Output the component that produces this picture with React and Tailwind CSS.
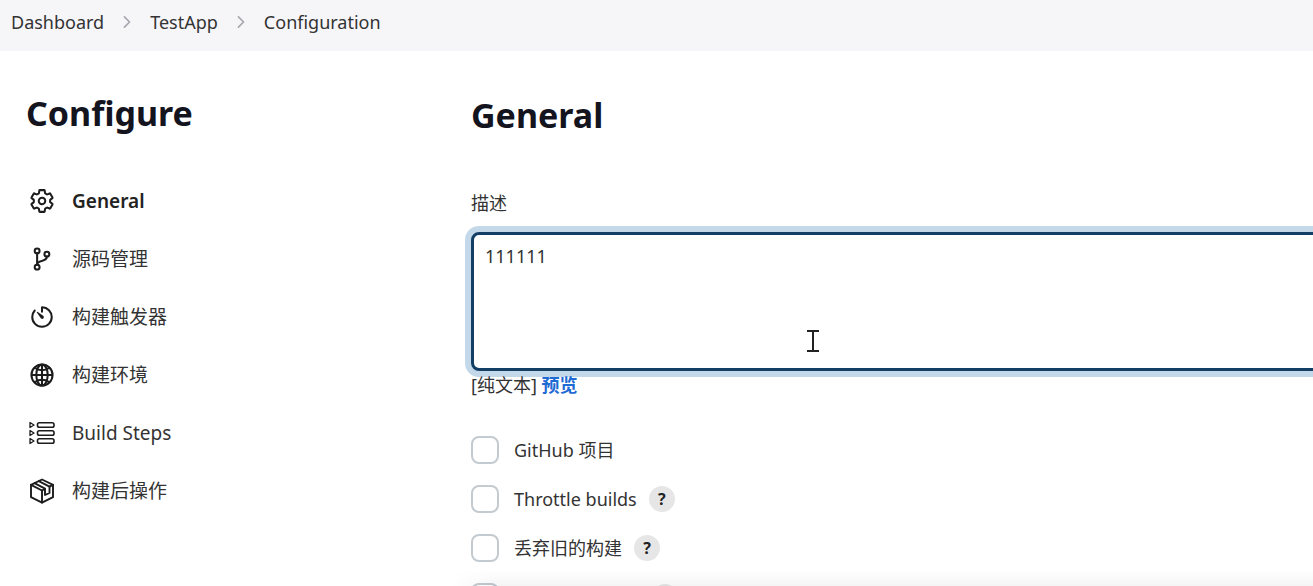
import { IoSettingsOutline, IoGitBranchOutline, IoTimerOutline, IoGlobeOutline, IoChevronForward } from "react-icons/io5";

function StepsIcon({ className }) {
  return (
    <svg viewBox="0 0 26 26" className={className} fill="none" stroke="currentColor" strokeWidth="1.6" strokeLinejoin="round" aria-hidden="true">
      {[5, 13, 21].map((y) => (
        <g key={y}>
          <path d={`M1 ${y - 2.5}V${y + 2.5}L5 ${y}Z`} strokeWidth="1.3" />
          <rect x="8.5" y={y - 2.2} width="16.5" height="4.4" rx="1.8" />
        </g>
      ))}
    </svg>
  );
}

function PackageIcon({ className }) {
  return (
    <svg viewBox="0 0 26 26" className={className} fill="none" stroke="currentColor" strokeWidth="1.9" strokeLinejoin="round" strokeLinecap="round" aria-hidden="true">
      <path d="M13 1.5L24 6.8V19.2L13 24.7L2 19.2V6.8Z" />
      <path d="M2 6.8L13 12.5L16 11M20.5 8.7L24 6.8M13 12.5V24.5" />
      <path d="M5.5 5.2L16 10.7V17L20.5 15V8.7L9.8 3.2" />
    </svg>
  );
}

const sections = [
  { label: "General", Icon: IoSettingsOutline, current: true },
  { label: "源码管理", Icon: IoGitBranchOutline },
  { label: "构建触发器", Icon: IoTimerOutline },
  { label: "构建环境", Icon: IoGlobeOutline },
  { label: "Build Steps", Icon: StepsIcon },
  { label: "构建后操作", Icon: PackageIcon },
];

const crumbs = ["Dashboard", "TestApp", "Configuration"];

const options = [
  { id: "github", label: "GitHub 项目" },
  { id: "throttle", label: "Throttle builds", help: true },
  { id: "discard", label: "丢弃旧的构建", help: true },
];

function Checkbox(props) {
  return <input type="checkbox" className="size-7 shrink-0 appearance-none rounded-lg border-2 border-[#c3cad0] bg-white" {...props} />;
}

function Option({ id, label, help }) {
  return (
    <li className="flex h-[49px] shrink-0 items-center">
      <Checkbox id={id} />
      <label htmlFor={id} className="pl-[15px]">{label}</label>
      {help && (
        <button type="button" aria-label={`Help: ${label}`} className="ml-3 size-[26px] rounded-full bg-[#e6e6e6] text-base leading-none font-bold text-[#222]">
          ?
        </button>
      )}
    </li>
  );
}

export default function App() {
  return (
    <div className="relative flex h-screen flex-col overflow-hidden bg-white font-['Noto_Sans','Noto_Sans_CJK_SC',sans-serif] text-lg text-[#333]">
      <nav aria-label="Breadcrumb" className="h-[51px] shrink-0 bg-[#f6f6f9] px-[11px] pt-2">
        <ol className="flex items-center">
          {crumbs.map((crumb, i) => (
            <li key={crumb} className="flex items-center">
              {i > 0 && <IoChevronForward className="mx-[14px] size-[18px] text-[#a8a8b0] [&_[stroke-width]]:stroke-[50px]" aria-hidden="true" />}
              <a href="#">{crumb}</a>
            </li>
          ))}
        </ol>
      </nav>
      <div className="flex min-h-0 grow">
        <aside className="w-[471px] shrink-0 pt-9 pl-[26px]">
          <h1 className="text-[34px] leading-[52px] font-bold text-[#14141f]">Configure</h1>
          <nav aria-label="Sections" className="mt-[33px]">
            <ul>
              {sections.map(({ label, Icon, current }) => (
                <li key={label}>
                  <a href="#" aria-current={current ? "true" : undefined} className={`flex h-[58px] items-center gap-[17px] pl-[3px] text-[19px] leading-8 ${current ? "font-semibold text-[#222]" : ""}`}>
                    <Icon className="size-[26px] text-[#1c1c1c] [&_[stroke-width='32']]:stroke-[40px]" />
                    {label}
                  </a>
                </li>
              ))}
            </ul>
          </nav>
        </aside>
        <main className="flex min-w-0 grow flex-col pt-[38px]">
          <h2 className="text-[34px] leading-[52px] font-bold text-[#14141f]">General</h2>
          <label htmlFor="description" className="mt-12 leading-7">描述</label>
          <textarea
            id="description"
            defaultValue="111111"
            className="mt-[15px] -mr-4 h-[139px] shrink-0 resize-none rounded-lg border-3 border-[#123f63] bg-white px-[11px] py-[7px] leading-7 shadow-[0_0_0_6px_#c3d9e9] outline-none"
          />
          <p className="leading-7">
            [纯文本] <a href="#" className="font-bold text-[#1f6ad4]">预览</a>
          </p>
          <ul className="mt-[26px] flex flex-col">
            {options.map((option) => (
              <Option key={option.id} {...option} />
            ))}
            <li className="flex h-[49px] shrink-0 items-center">
              <Checkbox aria-label="参数化构建过程" />
              <button type="button" aria-label="Help: 参数化构建过程" className="ml-[153px] size-[26px] rounded-full bg-[#e6e6e6]" />
            </li>
          </ul>
        </main>
      </div>
      <div className="pointer-events-none absolute right-0 bottom-0 left-[451px] h-4 bg-linear-to-b from-transparent to-black/4 mask-l-from-95% mask-l-to-100%" />
      <svg viewBox="0 0 14 24" className="pointer-events-none absolute top-[329px] left-[806px] h-6 w-[14px]" fill="none" stroke="#222" strokeWidth="2" aria-hidden="true">
        <path d="M1 2H13M7 2V22M1 22H13" />
      </svg>
    </div>
  );
}
